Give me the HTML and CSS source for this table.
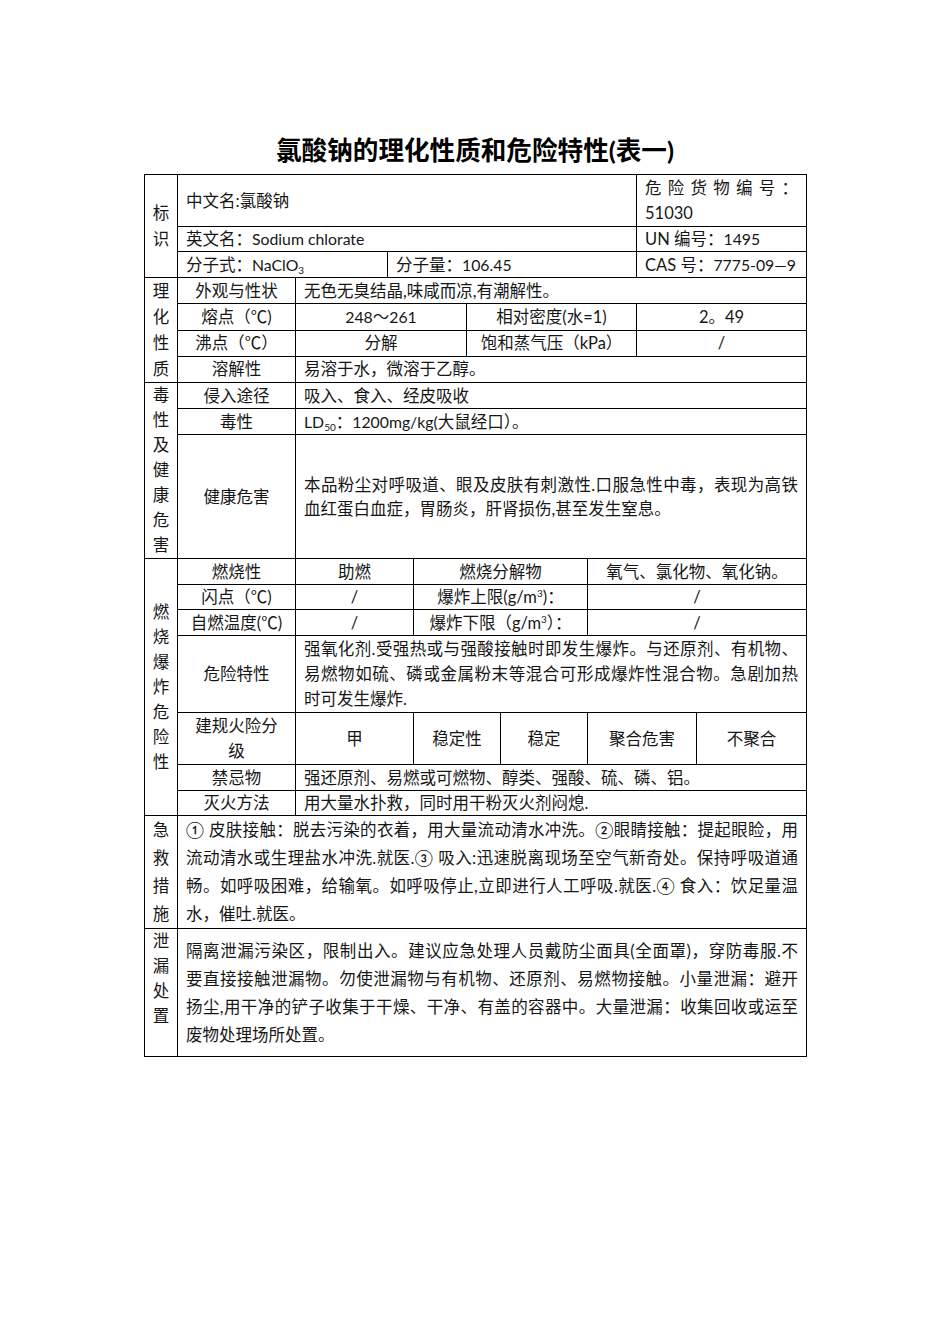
FILE: index.html
```html
<!DOCTYPE html>
<html lang="zh-CN">
<head>
<meta charset="utf-8">
<title>氯酸钠的理化性质和危险特性</title>
<link rel="stylesheet" href="styles.css">
</head>
<body>
<div class="page">
  <h1 class="title">氯酸钠的理化性质和危险特性(表一)</h1>
  <table class="sheet">
    <colgroup>
      <col class="w33"><col class="w118"><col class="w92"><col class="w26"><col class="w53">
      <col class="w34"><col class="w87"><col class="w49"><col class="w60"><col class="w110">
    </colgroup>
    <tbody>
      <tr class="h52">
        <td class="vl lh26" rowspan="3">标识</td>
        <td colspan="7">中文名:氯酸钠</td>
        <td colspan="2" class="lh25"><div class="jl">危险货物编号：</div><div>51030</div></td>
      </tr>
      <tr class="h25">
        <td colspan="7">英文名：<span class="en">Sodium chlorate</span></td>
        <td colspan="2">UN 编号：<span class="en">1495</span></td>
      </tr>
      <tr class="h26">
        <td colspan="2">分子式：<span class="en">NaClO<sub>3</sub></span></td>
        <td colspan="5">分子量：<span class="en">106.45</span></td>
        <td colspan="2" class="nw">CAS 号：<span class="en">7775-09—9</span></td>
      </tr>

      <tr class="h26">
        <td class="vl lh26" rowspan="4">理化性质</td>
        <td class="c">外观与性状</td>
        <td colspan="8">无色无臭结晶,味咸而凉,有潮解性。</td>
      </tr>
      <tr class="h26">
        <td class="c">熔点（℃)</td>
        <td class="c" colspan="3"><span class="en">248</span>～<span class="en">261</span></td>
        <td class="c" colspan="3">相对密度(水=1)</td>
        <td class="c" colspan="2">2。49</td>
      </tr>
      <tr class="h26">
        <td class="c">沸点（℃）</td>
        <td class="c" colspan="3">分解</td>
        <td class="c" colspan="3">饱和蒸气压（kPa）</td>
        <td class="c" colspan="2">/</td>
      </tr>
      <tr class="h26">
        <td class="c">溶解性</td>
        <td colspan="8">易溶于水，微溶于乙醇。</td>
      </tr>

      <tr class="h26">
        <td class="vl" rowspan="3">毒性及健康危害</td>
        <td class="c">侵入途径</td>
        <td colspan="8">吸入、食入、经皮吸收</td>
      </tr>
      <tr class="h26">
        <td class="c">毒性</td>
        <td colspan="8"><span class="en">LD<sub>50</sub></span>：<span class="en">1200mg/kg(</span>大鼠经口）。</td>
      </tr>
      <tr class="h124">
        <td class="c">健康危害</td>
        <td colspan="8" class="lh24">
          <div class="jl">本品粉尘对呼吸道、眼及皮肤有刺激性.口服急性中毒，表现为高铁</div>
          <div>血红蛋白血症，胃肠炎，肝肾损伤,甚至发生窒息。</div>
        </td>
      </tr>

      <tr class="h26">
        <td class="vl" rowspan="7">燃烧爆炸危险性</td>
        <td class="c">燃烧性</td>
        <td class="c" colspan="2">助燃</td>
        <td class="c" colspan="3">燃烧分解物</td>
        <td class="c" colspan="3">氧气、氯化物、氧化钠。</td>
      </tr>
      <tr class="h25">
        <td class="c">闪点（℃)</td>
        <td class="c" colspan="2">/</td>
        <td class="c" colspan="3">爆炸上限(g/m<sup>3</sup>)：</td>
        <td class="c" colspan="3">/</td>
      </tr>
      <tr class="h26">
        <td class="c">自燃温度(℃)</td>
        <td class="c" colspan="2">/</td>
        <td class="c" colspan="3">爆炸下限（g/m<sup>3</sup>）：</td>
        <td class="c" colspan="3">/</td>
      </tr>
      <tr class="h77">
        <td class="c">危险特性</td>
        <td colspan="8" class="lh25">
          <div class="jl">强氧化剂.受强热或与强酸接触时即发生爆炸。与还原剂、有机物、</div>
          <div class="jl">易燃物如硫、磷或金属粉末等混合可形成爆炸性混合物。急剧加热</div>
          <div>时可发生爆炸.</div>
        </td>
      </tr>
      <tr class="h52">
        <td class="c lh25">建规火险分<br>级</td>
        <td class="c" colspan="2">甲</td>
        <td class="c" colspan="2">稳定性</td>
        <td class="c">稳定</td>
        <td class="c" colspan="2">聚合危害</td>
        <td class="c">不聚合</td>
      </tr>
      <tr class="h26">
        <td class="c">禁忌物</td>
        <td colspan="8">强还原剂、易燃或可燃物、醇类、强酸、硫、磷、铝。</td>
      </tr>
      <tr class="h25">
        <td class="c">灭火方法</td>
        <td colspan="8">用大量水扑救，同时用干粉灭火剂闷熄.</td>
      </tr>

      <tr class="h113">
        <td class="vl lh28 top">急救措施</td>
        <td colspan="9" class="lh28">
          <div class="jl">① 皮肤接触：脱去污染的衣着，用大量流动清水冲洗。②眼睛接触：提起眼睑，用</div>
          <div class="jl">流动清水或生理盐水冲洗.就医.③ 吸入:迅速脱离现场至空气新奇处。保持呼吸道通</div>
          <div class="jl">畅。如呼吸困难，给输氧。如呼吸停止,立即进行人工呼吸.就医.④ 食入：饮足量温</div>
          <div>水，催吐.就医。</div>
        </td>
      </tr>
      <tr class="h128">
        <td class="vl top">泄漏处置</td>
        <td colspan="9" class="lh28">
          <div class="jl">隔离泄漏污染区，限制出入。建议应急处理人员戴防尘面具(全面罩)，穿防毒服.不</div>
          <div class="jl">要直接接触泄漏物。勿使泄漏物与有机物、还原剂、易燃物接触。小量泄漏：避开</div>
          <div class="jl">扬尘,用干净的铲子收集于干燥、干净、有盖的容器中。大量泄漏：收集回收或运至</div>
          <div>废物处理场所处置。</div>
        </td>
      </tr>
    </tbody>
  </table>
</div>
</body>
</html>
```

FILE: styles.css
```css
html, body {
  margin: 0;
  padding: 0;
  background: #ffffff;
}

body {
  font-family: "Lato", "Noto Sans CJK SC", sans-serif;
  color: #161616;
}

.page {
  width: 662px;
  margin: 0 auto;
  padding-top: 134px;
}

.title {
  margin: 0 0 8px;
  font-size: 25.6px;
  line-height: 32px;
  font-weight: 700;
  text-align: center;
  color: #000;
}

.sheet {
  width: 662px;
  border-collapse: collapse;
  table-layout: fixed;
  font-size: 16.5px;
}

.sheet td {
  border: 1px solid #000;
  padding: 0 8px;
  vertical-align: middle;
  line-height: 22px;
  text-align: left;
  overflow: hidden;
}

.w33 { width: 33px; }
.w118 { width: 118px; }
.w92 { width: 92px; }
.w26 { width: 26px; }
.w53 { width: 53px; }
.w34 { width: 34px; }
.w87 { width: 87px; }
.w49 { width: 49px; }
.w60 { width: 60px; }
.w110 { width: 110px; }

.h25 { height: 25px; }
.h26 { height: 26px; }
.h52 { height: 52px; }
.h77 { height: 77px; }
.h113 { height: 113px; }
.h124 { height: 124px; }
.h128 { height: 128px; }

.sheet td.c { text-align: center; }

.sheet td.vl {
  padding: 0 4px;
  text-align: center;
  line-height: 25px;
}

.sheet td.lh24 { line-height: 24px; }
.sheet td.lh25 { line-height: 25px; }
.sheet td.lh26 { line-height: 26px; }
.sheet td.lh28 { line-height: 28px; }
.sheet td.top { vertical-align: top; }
.sheet td.nw { white-space: nowrap; padding-right: 0; }

.en { font-size: 15.8px; }

.jl {
  white-space: nowrap;
  text-align: justify;
  text-align-last: justify;
}

sub, sup {
  font-size: 10px;
  line-height: 0;
}
sub { vertical-align: -3px; }
sup { vertical-align: 6px; }
```
